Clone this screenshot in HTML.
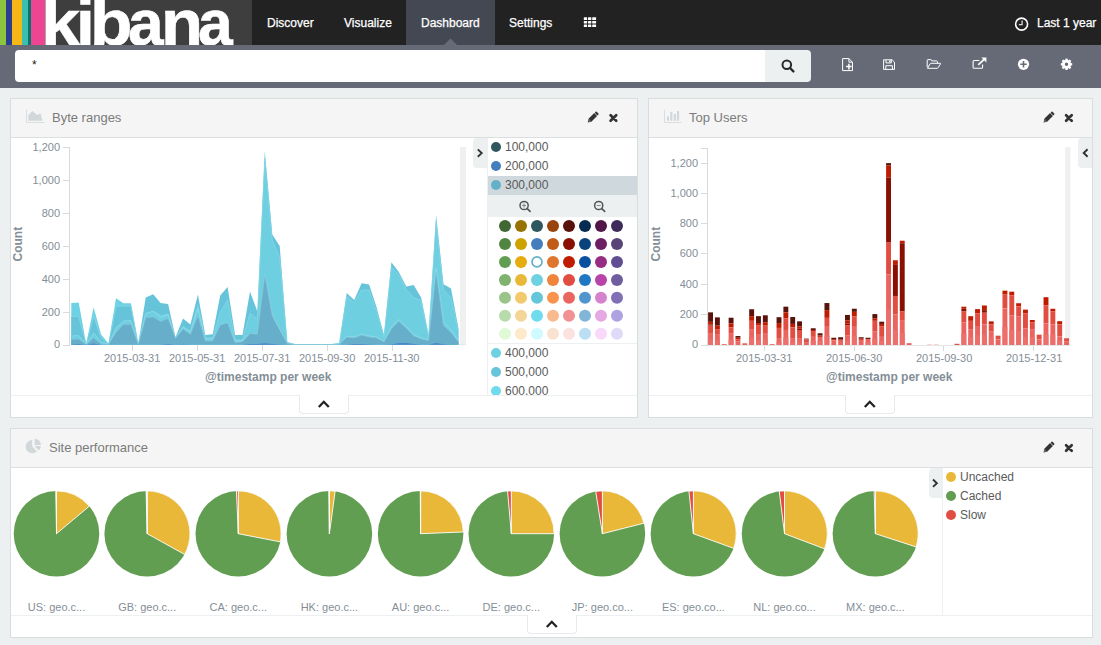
<!DOCTYPE html>
<html>
<head>
<meta charset="utf-8">
<title>Kibana Dashboard</title>
<style>
*{box-sizing:border-box;margin:0;padding:0}
html,body{width:1101px;height:645px;overflow:hidden;background:#ecf0f1;font-family:"Liberation Sans",sans-serif;color:#444}
.abs{position:absolute}
#nav{position:absolute;left:0;top:0;width:1101px;height:45px;background:#222}
#logo{position:absolute;left:0;top:0;width:252px;height:45px;background:#3e3e3e;overflow:hidden}
#logo i{position:absolute;top:0;height:45px;display:block}
#logo span{position:absolute;top:-9.4px;font-size:64px;line-height:64px;font-weight:bold;color:#fff;white-space:nowrap;transform-origin:0 0;-webkit-text-stroke:0.6px #fff}
.nv{position:absolute;top:0;height:45px;line-height:47px;font-size:12px;color:#fff;padding:0 15px;white-space:nowrap;-webkit-text-stroke:0.25px #fff}
.nv.act{background:#444853}
#tb{position:absolute;left:0;top:45px;width:1101px;height:43px;background:#656a76}
#q{position:absolute;left:15px;top:5px;width:750px;height:32px;background:#fff;border-radius:4px 0 0 4px;font-size:12px;line-height:30px;padding-left:17px;color:#222}
#qb{position:absolute;left:765px;top:5px;width:46px;height:32px;background:#ecf0f1;border-radius:0 4px 4px 0}
.panel{position:absolute;background:#fff;border:1px solid #dadddd}
.ph{position:absolute;left:0;top:0;right:0;height:39px;background:#f5f5f5;border-bottom:1px solid #dcdfe0}
.pt{position:absolute;top:0;line-height:38px;font-size:13px;color:#7b7b7b;white-space:nowrap}
.ax{position:absolute;font-size:11px;color:#848e96;white-space:nowrap;line-height:12px}
.axr{text-align:right;width:40px}
.axt{position:absolute;font-size:12px;font-weight:bold;color:#848e96;white-space:nowrap;line-height:14px}
.lg{position:absolute;font-size:12px;color:#5a5a5a;line-height:19px;white-space:nowrap;margin-top:1px}
.dot{position:absolute;width:10px;height:10px;border-radius:50%}
.plbl{position:absolute;top:601px;width:90px;text-align:center;font-size:11px;color:#848e96;line-height:12px;white-space:nowrap}
.spy{position:absolute;background:#fff;border:1px solid #e6eaeb;border-top:none;border-radius:0 0 4px 4px}
svg{position:absolute;left:0;top:0;overflow:visible}
</style>
</head>
<body>

<!-- ======================= NAV ======================= -->
<div id="nav">
  <div id="logo">
    <i style="left:0;width:6px;background:#8cc540"></i>
    <i style="left:6px;width:5.5px;background:#2a3f90"></i>
    <i style="left:11.5px;width:10.5px;background:#f5b817"></i>
    <i style="left:22px;width:6px;background:#3cbeb0"></i>
    <i style="left:28px;width:3px;background:#07766a"></i>
    <i style="left:31px;width:14px;background:#ee4593"></i>
    <span style="left:40.8px;transform:scaleX(1.10)">k</span><span style="left:76.25px;transform:scaleX(1.06)">i</span><span style="left:89.9px;transform:scaleX(1.084)">b</span><span style="left:128.1px">a</span><span style="left:160.7px;transform:scaleX(1.075)">n</span><span style="left:198.1px;transform:scaleX(0.975)">a</span>
  </div>
  <div class="nv" style="left:252px">Discover</div>
  <div class="nv" style="left:329px">Visualize</div>
  <div class="nv act" style="left:406px">Dashboard</div>
  <div class="nv" style="left:494px">Settings</div>
  <div class="nv" style="left:1037px;padding:0">Last 1 year</div>
</div>

<!-- ======================= TOOLBAR ======================= -->
<div id="tb">
  <div id="q">*</div>
  <div id="qb"></div>
</div>

<!-- ======================= PANEL 1 : Byte ranges ======================= -->
<div class="panel" style="left:10px;top:98px;width:628px;height:320px">
  <div class="ph"></div>
  <div class="pt" style="left:41px">Byte ranges</div>
</div>

<!-- ======================= PANEL 2 : Top Users ======================= -->
<div class="panel" style="left:648px;top:98px;width:445px;height:320px">
  <div class="ph"></div>
  <div class="pt" style="left:40px">Top Users</div>
</div>

<!-- ======================= PANEL 3 : Site performance ======================= -->
<div class="panel" style="left:10px;top:428px;width:1083px;height:210px">
  <div class="ph"></div>
  <div class="pt" style="left:38px">Site performance</div>
</div>

<!-- axis labels panel 1 -->
<div class="ax axr" style="left:20px;top:141px">1,200</div>
<div class="ax axr" style="left:20px;top:174px">1,000</div>
<div class="ax axr" style="left:20px;top:207px">800</div>
<div class="ax axr" style="left:20px;top:240px">600</div>
<div class="ax axr" style="left:20px;top:273px">400</div>
<div class="ax axr" style="left:20px;top:306px">200</div>
<div class="ax axr" style="left:20px;top:338px">0</div>
<div class="ax" style="left:104px;top:352px">2015-03-31</div>
<div class="ax" style="left:169px;top:352px">2015-05-31</div>
<div class="ax" style="left:234px;top:352px">2015-07-31</div>
<div class="ax" style="left:299px;top:352px">2015-09-30</div>
<div class="ax" style="left:364px;top:352px">2015-11-30</div>
<div class="axt" style="left:205px;top:370px">@timestamp per week</div>
<div class="axt" style="left:0;top:0;transform-origin:0 0;transform:translate(11px,261.5px) rotate(-90deg)">Count</div>

<!-- axis labels panel 2 -->
<div class="ax axr" style="left:658px;top:157px">1,200</div>
<div class="ax axr" style="left:658px;top:187px">1,000</div>
<div class="ax axr" style="left:658px;top:217px">800</div>
<div class="ax axr" style="left:658px;top:247px">600</div>
<div class="ax axr" style="left:658px;top:278px">400</div>
<div class="ax axr" style="left:658px;top:308px">200</div>
<div class="ax axr" style="left:658px;top:338px">0</div>
<div class="ax" style="left:736px;top:352px">2015-03-31</div>
<div class="ax" style="left:826px;top:352px">2015-06-30</div>
<div class="ax" style="left:916px;top:352px">2015-09-30</div>
<div class="ax" style="left:1006px;top:352px">2015-12-31</div>
<div class="axt" style="left:826px;top:370px">@timestamp per week</div>
<div class="axt" style="left:0;top:0;transform-origin:0 0;transform:translate(649px,261.5px) rotate(-90deg)">Count</div>

<!-- legend panel 1 -->
<div class="abs" style="left:487px;top:138px;width:150px;height:257px;border-left:1px solid #ecf0f1;background:#fff"></div>
<div class="abs" style="left:488px;top:176px;width:149px;height:19px;background:#cfd8dc"></div>
<div class="abs" style="left:488px;top:195px;width:149px;height:22px;background:#ecf0f1"></div>
<div class="abs" style="left:488px;top:343px;width:149px;height:1px;background:#ecf0f1"></div>
<div class="dot" style="left:491px;top:142px;background:#2f575e"></div><div class="lg" style="left:505px;top:137px">100,000</div>
<div class="dot" style="left:491px;top:161px;background:#447ebc"></div><div class="lg" style="left:505px;top:156px">200,000</div>
<div class="dot" style="left:491px;top:180px;background:#64b0c8"></div><div class="lg" style="left:505px;top:175px">300,000</div>
<div class="dot" style="left:491px;top:348px;background:#6ed0e0"></div><div class="lg" style="left:505px;top:343px">400,000</div>
<div class="dot" style="left:491px;top:367px;background:#65c5db"></div><div class="lg" style="left:505px;top:362px">500,000</div>
<div class="abs" style="left:489px;top:381px;width:148px;height:14px;overflow:hidden"><div class="dot" style="left:2px;top:5px;background:#70dbed"></div><div class="lg" style="left:16px;top:0px">600,000</div></div>

<!-- legend panel 3 -->
<div class="abs" style="left:942px;top:468px;width:1px;height:147px;background:#ecf0f1"></div>
<div class="dot" style="left:946px;top:472px;background:#eab839"></div><div class="lg" style="left:960px;top:467px">Uncached</div>
<div class="dot" style="left:946px;top:491px;background:#629e51"></div><div class="lg" style="left:960px;top:486px">Cached</div>
<div class="dot" style="left:946px;top:510px;background:#e24d42"></div><div class="lg" style="left:960px;top:505px">Slow</div>

<!-- spy lines and tabs -->
<div class="abs" style="left:11px;top:395px;width:626px;height:1px;background:#ecf0f1"></div>
<div class="spy" style="left:299px;top:395px;width:50px;height:19px"></div>
<div class="abs" style="left:649px;top:395px;width:443px;height:1px;background:#ecf0f1"></div>
<div class="spy" style="left:845px;top:395px;width:50px;height:19px"></div>
<div class="abs" style="left:11px;top:615px;width:1081px;height:1px;background:#ecf0f1"></div>
<div class="spy" style="left:527px;top:615px;width:50px;height:19px"></div>

<!-- legend toggles -->
<div class="abs" style="left:473px;top:138px;width:15px;height:30px;background:#ecf0f1;border-radius:4px 0 0 4px"></div>
<div class="abs" style="left:1078px;top:138px;width:14px;height:30px;background:#ecf0f1;border-radius:4px 0 0 4px"></div>
<div class="abs" style="left:929px;top:468px;width:14px;height:30px;background:#ecf0f1;border-radius:4px 0 0 4px"></div>

<div class="plbl" style="left:11.5px">US: geo.c...</div>
<div class="plbl" style="left:102.2px">GB: geo.c...</div>
<div class="plbl" style="left:193.3px">CA: geo.c...</div>
<div class="plbl" style="left:284.4px">HK: geo.c...</div>
<div class="plbl" style="left:375.6px">AU: geo.c...</div>
<div class="plbl" style="left:466.3px">DE: geo.c...</div>
<div class="plbl" style="left:557.4px">JP: geo.co...</div>
<div class="plbl" style="left:648.4px">ES: geo.co...</div>
<div class="plbl" style="left:739.5px">NL: geo.co...</div>
<div class="plbl" style="left:830.4px">MX: geo.c...</div>

<!-- ======================= SVG overlay ======================= -->
<svg width="1101" height="645" viewBox="0 0 1101 645">
  <!-- active tab notch -->
  <polygon points="444,45 450.5,38.5 457,45" fill="#656a76"/>

  <!-- grey brush bands -->
  <rect x="460" y="147" width="6" height="198" fill="#f0f0f0"/>
  <rect x="1065" y="147" width="5.5" height="198" fill="#f0f0f0"/>

  <!-- axes panel 1 -->
  <g stroke="#d9dadb" stroke-width="1" fill="none" shape-rendering="crispEdges">
    <path d="M63,147.5H69.5V345.5H63"/>
    <path d="M63,180.5H69 M63,213.5H69 M63,246.5H69 M63,279.5H69 M63,312.5H69"/>
    <path d="M71,344.5H466" stroke="#e4e6e7"/>
    <path d="M132.5,345V351 M197.5,345V351 M262.5,345V351 M327.5,345V351 M392.5,345V351"/>
  </g>
  <!-- axes panel 2 -->
  <g stroke="#d9dadb" stroke-width="1" fill="none" shape-rendering="crispEdges">
    <path d="M701,148.5H707.5V345.5H701"/>
    <path d="M701,163.5H707 M701,193.5H707 M701,223.5H707 M701,253.5H707 M701,284.5H707 M701,314.5H707"/>
    <path d="M707.5,345.5H1070" stroke="#e4e6e7"/>
    <path d="M764.5,346V351 M854.5,346V351 M943.5,346V351 M1033.5,346V351"/>
  </g>

  <!-- area chart -->
  <g>
<polygon points="71.3,344.7 71.3,303.0 78.7,302.5 86.2,344.0 93.6,307.3 101.1,334.5 108.5,343.6 116.0,298.2 123.4,303.3 130.9,303.3 138.3,343.6 138.3,344.7" fill="#6dd2e4" />
<polygon points="71.3,344.7 71.3,316.4 78.7,316.7 86.2,344.5 93.6,316.0 101.1,338.0 108.5,344.5 116.0,306.4 123.4,306.0 130.9,306.0 138.3,344.5 138.3,344.7" fill="#66c4da" />
<polygon points="138.3,344.7 138.3,343.6 145.7,297.6 153.2,294.2 160.6,303.1 168.1,304.0 175.5,337.3 183.0,318.5 190.4,324.5 197.9,294.5 205.3,335.0 212.7,334.2 220.2,295.5 227.6,287.0 235.1,335.0 242.5,335.0 250.0,291.6 257.4,311.5 264.8,151.4 272.3,234.5 279.7,246.0 287.2,342.0 294.6,344.0 302.1,344.0 309.5,344.0 317.0,344.0 324.4,344.0 331.8,344.0 339.3,343.0 346.7,293.0 354.2,300.0 361.6,283.3 369.1,284.4 376.5,307.0 384.0,335.0 391.4,262.3 398.8,272.0 406.3,286.5 413.7,285.0 421.2,297.7 428.6,335.0 436.1,215.0 443.5,284.2 451.0,288.4 458.4,328.0 458.4,344.7" fill="#66c4da" />
<polygon points="138.3,344.7 138.3,344.5 145.7,313.6 153.2,311.3 160.6,315.5 168.1,314.2 175.5,338.5 183.0,326.4 190.4,331.0 197.9,305.5 205.3,338.0 212.7,337.8 220.2,312.7 227.6,300.0 235.1,340.0 242.5,340.0 250.0,313.3 257.4,319.0 264.8,158.0 272.3,241.0 279.7,257.0 287.2,343.0 294.6,344.5 302.1,344.5 309.5,344.5 317.0,344.5 324.4,344.5 331.8,344.5 339.3,344.0 346.7,296.5 354.2,302.5 361.6,290.0 369.1,290.0 376.5,311.0 384.0,337.0 391.4,267.4 398.8,274.4 406.3,289.5 413.7,297.7 421.2,300.5 428.6,337.0 436.1,222.0 443.5,289.5 451.0,297.7 458.4,331.0 458.4,344.7" fill="#6ecfe0" />
<polyline points="71.3,316.4 78.7,316.7 86.2,344.5 93.6,316.0 101.1,338.0 108.5,344.5 116.0,306.4 123.4,306.0 130.9,306.0 138.3,344.5 145.7,313.6 153.2,311.3 160.6,315.5 168.1,314.2 175.5,338.5 183.0,326.4 190.4,331.0 197.9,305.5 205.3,338.0 212.7,337.8 220.2,312.7 227.6,300.0 235.1,340.0 242.5,340.0 250.0,313.3 257.4,319.0 264.8,158.0 272.3,241.0 279.7,257.0 287.2,343.0 294.6,344.5 302.1,344.5 309.5,344.5 317.0,344.5 324.4,344.5 331.8,344.5 339.3,344.0 346.7,296.5 354.2,302.5 361.6,290.0 369.1,290.0 376.5,311.0 384.0,337.0 391.4,267.4 398.8,274.4 406.3,289.5 413.7,297.7 421.2,300.5 428.6,337.0 436.1,222.0 443.5,289.5 451.0,297.7 458.4,331.0" fill="none" stroke="#8ad9e8" stroke-width="0.7"/>
<polygon points="71.3,344.7 71.3,336.0 78.7,335.5 86.2,344.5 93.6,333.0 101.1,342.0 108.5,344.5 116.0,328.0 123.4,321.0 130.9,320.5 138.3,344.5 145.7,313.6 153.2,311.3 160.6,317.5 168.1,314.8 175.5,338.5 183.0,327.5 190.4,332.5 197.9,309.0 205.3,339.0 212.7,339.0 220.2,324.7 227.6,322.4 235.1,341.0 242.5,340.5 250.0,333.3 257.4,333.9 264.8,274.5 272.3,315.0 279.7,329.0 287.2,343.5 294.6,344.5 302.1,344.5 309.5,344.5 317.0,344.5 324.4,344.5 331.8,344.5 339.3,344.5 346.7,336.0 354.2,337.0 361.6,334.0 369.1,336.0 376.5,337.0 384.0,341.5 391.4,327.0 398.8,319.5 406.3,326.5 413.7,334.5 421.2,338.0 428.6,340.0 436.1,268.0 443.5,322.0 451.0,330.0 458.4,341.0 458.4,344.7" fill="#6fcfe1" />
<polyline points="71.3,336.0 78.7,335.5 86.2,344.5 93.6,333.0 101.1,342.0 108.5,344.5 116.0,328.0 123.4,321.0 130.9,320.5 138.3,344.5 145.7,313.6 153.2,311.3 160.6,317.5 168.1,314.8 175.5,338.5 183.0,327.5 190.4,332.5 197.9,309.0 205.3,339.0 212.7,339.0 220.2,324.7 227.6,322.4 235.1,341.0 242.5,340.5 250.0,333.3 257.4,333.9 264.8,274.5 272.3,315.0 279.7,329.0 287.2,343.5 294.6,344.5 302.1,344.5 309.5,344.5 317.0,344.5 324.4,344.5 331.8,344.5 339.3,344.5 346.7,336.0 354.2,337.0 361.6,334.0 369.1,336.0 376.5,337.0 384.0,341.5 391.4,327.0 398.8,319.5 406.3,326.5 413.7,334.5 421.2,338.0 428.6,340.0 436.1,268.0 443.5,322.0 451.0,330.0 458.4,341.0" fill="none" stroke="#93dcea" stroke-width="0.7"/>
<polygon points="71.3,344.7 71.3,339.6 78.7,339.0 86.2,344.5 93.6,338.0 101.1,344.0 108.5,344.5 116.0,332.7 123.4,324.5 130.9,324.5 138.3,344.5 145.7,317.8 153.2,317.0 160.6,321.5 168.1,318.5 175.5,338.5 183.0,329.0 190.4,334.5 197.9,316.0 205.3,341.0 212.7,341.0 220.2,325.0 227.6,322.7 235.1,342.7 242.5,341.8 250.0,333.6 257.4,334.2 264.8,275.0 272.3,316.0 279.7,330.0 287.2,343.5 294.6,344.5 302.1,344.5 309.5,344.5 317.0,344.5 324.4,344.5 331.8,344.5 339.3,344.5 346.7,337.2 354.2,338.0 361.6,335.3 369.1,337.0 376.5,338.0 384.0,342.0 391.4,329.0 398.8,321.4 406.3,328.4 413.7,336.0 421.2,339.0 428.6,340.7 436.1,272.0 443.5,325.6 451.0,332.5 458.4,342.0 458.4,344.7" fill="#66aec9" />
<polyline points="71.3,339.6 78.7,339.0 86.2,344.5 93.6,338.0 101.1,344.0 108.5,344.5 116.0,332.7 123.4,324.5 130.9,324.5 138.3,344.5 145.7,317.8 153.2,317.0 160.6,321.5 168.1,318.5 175.5,338.5 183.0,329.0 190.4,334.5 197.9,316.0 205.3,341.0 212.7,341.0 220.2,325.0 227.6,322.7 235.1,342.7 242.5,341.8 250.0,333.6 257.4,334.2 264.8,275.0 272.3,316.0 279.7,330.0 287.2,343.5 294.6,344.5 302.1,344.5 309.5,344.5 317.0,344.5 324.4,344.5 331.8,344.5 339.3,344.5 346.7,337.2 354.2,338.0 361.6,335.3 369.1,337.0 376.5,338.0 384.0,342.0 391.4,329.0 398.8,321.4 406.3,328.4 413.7,336.0 421.2,339.0 428.6,340.7 436.1,272.0 443.5,325.6 451.0,332.5 458.4,342.0" fill="none" stroke="#86c2d8" stroke-width="0.6"/>
<polygon points="71.3,344.7 71.3,344.4 78.7,343.9 86.2,344.7 93.6,343.4 101.1,344.7 108.5,344.7 116.0,344.7 123.4,344.7 130.9,344.7 138.3,344.7 145.7,344.7 153.2,344.7 160.6,344.7 168.1,343.9 175.5,344.7 183.0,344.4 190.4,344.7 197.9,344.7 205.3,344.7 212.7,344.7 220.2,344.7 227.6,344.7 235.1,344.7 242.5,344.7 250.0,344.1 257.4,344.1 264.8,343.2 272.3,343.9 279.7,344.4 287.2,344.7 294.6,344.7 302.1,344.7 309.5,344.7 317.0,344.7 324.4,344.7 331.8,344.7 339.3,344.7 346.7,344.7 354.2,343.9 361.6,343.9 369.1,344.4 376.5,344.7 384.0,344.7 391.4,344.4 398.8,342.9 406.3,342.9 413.7,343.9 421.2,344.7 428.6,344.7 436.1,342.9 443.5,344.2 451.0,344.7 458.4,344.7 458.4,344.7" fill="#4a86c8" />
  </g>

  <!-- bar chart -->
  <g>
<rect x="708.10" y="312.36" width="4.90" height="9.50" fill="#58140c"/>
<rect x="708.10" y="321.86" width="4.90" height="2.59" fill="#bf1b00"/>
<rect x="708.10" y="324.45" width="4.90" height="1.21" fill="#890f02"/>
<rect x="708.10" y="325.66" width="4.90" height="8.12" fill="#e24d42"/>
<rect x="708.10" y="333.77" width="4.90" height="11.23" fill="#ea6460"/>
<rect x="708.10" y="339.39" width="4.90" height="5.61" fill="#ec6f6b"/>
<rect x="714.95" y="317.37" width="4.90" height="8.29" fill="#58140c"/>
<rect x="714.95" y="325.66" width="4.90" height="3.45" fill="#bf1b00"/>
<rect x="714.95" y="329.11" width="4.90" height="5.70" fill="#e24d42"/>
<rect x="714.95" y="334.81" width="4.90" height="10.19" fill="#ea6460"/>
<rect x="714.95" y="339.91" width="4.90" height="5.09" fill="#ec6f6b"/>
<rect x="721.79" y="344.14" width="4.90" height="0.86" fill="#ea6460"/>
<rect x="728.64" y="317.71" width="4.90" height="5.70" fill="#58140c"/>
<rect x="728.64" y="323.41" width="4.90" height="3.97" fill="#bf1b00"/>
<rect x="728.64" y="327.38" width="4.90" height="6.39" fill="#e24d42"/>
<rect x="728.64" y="333.77" width="4.90" height="11.23" fill="#ea6460"/>
<rect x="728.64" y="339.39" width="4.90" height="5.61" fill="#ec6f6b"/>
<rect x="735.48" y="336.02" width="4.90" height="1.73" fill="#58140c"/>
<rect x="735.48" y="337.75" width="4.90" height="1.73" fill="#bf1b00"/>
<rect x="735.48" y="339.47" width="4.90" height="1.73" fill="#e24d42"/>
<rect x="735.48" y="341.20" width="4.90" height="3.80" fill="#ea6460"/>
<rect x="742.33" y="343.27" width="4.90" height="1.73" fill="#ea6460"/>
<rect x="749.18" y="309.25" width="4.90" height="6.91" fill="#58140c"/>
<rect x="749.18" y="316.16" width="4.90" height="4.66" fill="#bf1b00"/>
<rect x="749.18" y="320.82" width="4.90" height="8.29" fill="#e24d42"/>
<rect x="749.18" y="329.11" width="4.90" height="15.89" fill="#ea6460"/>
<rect x="749.18" y="337.06" width="4.90" height="7.94" fill="#ec6f6b"/>
<rect x="756.02" y="316.16" width="4.90" height="6.91" fill="#58140c"/>
<rect x="756.02" y="323.07" width="4.90" height="2.07" fill="#bf1b00"/>
<rect x="756.02" y="325.14" width="4.90" height="9.67" fill="#e24d42"/>
<rect x="756.02" y="334.81" width="4.90" height="10.19" fill="#ea6460"/>
<rect x="756.02" y="339.91" width="4.90" height="5.09" fill="#ec6f6b"/>
<rect x="762.87" y="315.29" width="4.90" height="6.91" fill="#58140c"/>
<rect x="762.87" y="322.20" width="4.90" height="3.45" fill="#bf1b00"/>
<rect x="762.87" y="325.66" width="4.90" height="8.12" fill="#e24d42"/>
<rect x="762.87" y="333.77" width="4.90" height="11.23" fill="#ea6460"/>
<rect x="762.87" y="339.39" width="4.90" height="5.61" fill="#ec6f6b"/>
<rect x="769.71" y="344.14" width="4.90" height="0.86" fill="#ea6460"/>
<rect x="776.56" y="317.19" width="4.90" height="5.87" fill="#58140c"/>
<rect x="776.56" y="323.07" width="4.90" height="4.84" fill="#bf1b00"/>
<rect x="776.56" y="327.90" width="4.90" height="10.19" fill="#e24d42"/>
<rect x="776.56" y="338.09" width="4.90" height="6.91" fill="#ea6460"/>
<rect x="776.56" y="341.55" width="4.90" height="3.45" fill="#ec6f6b"/>
<rect x="783.41" y="306.66" width="4.90" height="5.70" fill="#58140c"/>
<rect x="783.41" y="312.36" width="4.90" height="5.87" fill="#bf1b00"/>
<rect x="783.41" y="318.23" width="4.90" height="11.74" fill="#e24d42"/>
<rect x="783.41" y="329.97" width="4.90" height="15.03" fill="#ea6460"/>
<rect x="783.41" y="337.49" width="4.90" height="7.51" fill="#ec6f6b"/>
<rect x="790.25" y="317.02" width="4.90" height="6.91" fill="#58140c"/>
<rect x="790.25" y="323.93" width="4.90" height="3.45" fill="#bf1b00"/>
<rect x="790.25" y="327.38" width="4.90" height="10.71" fill="#e24d42"/>
<rect x="790.25" y="338.09" width="4.90" height="6.91" fill="#ea6460"/>
<rect x="790.25" y="341.55" width="4.90" height="3.45" fill="#ec6f6b"/>
<rect x="797.10" y="321.34" width="4.90" height="5.18" fill="#58140c"/>
<rect x="797.10" y="326.52" width="4.90" height="2.25" fill="#bf1b00"/>
<rect x="797.10" y="328.77" width="4.90" height="1.21" fill="#890f02"/>
<rect x="797.10" y="329.97" width="4.90" height="8.12" fill="#e24d42"/>
<rect x="797.10" y="338.09" width="4.90" height="6.91" fill="#ea6460"/>
<rect x="797.10" y="341.55" width="4.90" height="3.45" fill="#ec6f6b"/>
<rect x="803.94" y="338.61" width="4.90" height="0.86" fill="#58140c"/>
<rect x="803.94" y="339.47" width="4.90" height="2.59" fill="#e24d42"/>
<rect x="803.94" y="342.06" width="4.90" height="2.94" fill="#ea6460"/>
<rect x="810.79" y="328.25" width="4.90" height="1.73" fill="#58140c"/>
<rect x="810.79" y="329.97" width="4.90" height="1.73" fill="#bf1b00"/>
<rect x="810.79" y="331.70" width="4.90" height="5.18" fill="#e24d42"/>
<rect x="810.79" y="336.88" width="4.90" height="8.12" fill="#ea6460"/>
<rect x="810.79" y="340.94" width="4.90" height="4.06" fill="#ec6f6b"/>
<rect x="817.64" y="333.26" width="4.90" height="2.25" fill="#58140c"/>
<rect x="817.64" y="335.50" width="4.90" height="1.38" fill="#bf1b00"/>
<rect x="817.64" y="336.88" width="4.90" height="8.12" fill="#ea6460"/>
<rect x="817.64" y="340.94" width="4.90" height="4.06" fill="#ec6f6b"/>
<rect x="824.48" y="303.03" width="4.90" height="7.08" fill="#58140c"/>
<rect x="824.48" y="310.11" width="4.90" height="7.77" fill="#bf1b00"/>
<rect x="824.48" y="317.88" width="4.90" height="8.12" fill="#e24d42"/>
<rect x="824.48" y="326.00" width="4.90" height="19.00" fill="#ea6460"/>
<rect x="824.48" y="335.50" width="4.90" height="9.50" fill="#ec6f6b"/>
<rect x="831.33" y="337.75" width="4.90" height="1.38" fill="#58140c"/>
<rect x="831.33" y="339.13" width="4.90" height="1.21" fill="#bf1b00"/>
<rect x="831.33" y="340.34" width="4.90" height="4.66" fill="#ea6460"/>
<rect x="838.17" y="337.23" width="4.90" height="2.25" fill="#58140c"/>
<rect x="838.17" y="339.47" width="4.90" height="1.21" fill="#bf1b00"/>
<rect x="838.17" y="340.68" width="4.90" height="4.32" fill="#ea6460"/>
<rect x="845.02" y="314.95" width="4.90" height="5.53" fill="#58140c"/>
<rect x="845.02" y="320.47" width="4.90" height="3.11" fill="#bf1b00"/>
<rect x="845.02" y="323.58" width="4.90" height="1.55" fill="#890f02"/>
<rect x="845.02" y="325.14" width="4.90" height="10.02" fill="#e24d42"/>
<rect x="845.02" y="335.16" width="4.90" height="9.84" fill="#ea6460"/>
<rect x="845.02" y="340.08" width="4.90" height="4.92" fill="#ec6f6b"/>
<rect x="851.87" y="308.73" width="4.90" height="3.11" fill="#58140c"/>
<rect x="851.87" y="311.84" width="4.90" height="4.66" fill="#bf1b00"/>
<rect x="851.87" y="316.50" width="4.90" height="10.36" fill="#e24d42"/>
<rect x="851.87" y="326.87" width="4.90" height="18.13" fill="#ea6460"/>
<rect x="851.87" y="335.93" width="4.90" height="9.07" fill="#ec6f6b"/>
<rect x="858.71" y="337.23" width="4.90" height="1.38" fill="#58140c"/>
<rect x="858.71" y="338.61" width="4.90" height="1.21" fill="#bf1b00"/>
<rect x="858.71" y="339.82" width="4.90" height="5.18" fill="#ea6460"/>
<rect x="865.56" y="337.75" width="4.90" height="1.21" fill="#58140c"/>
<rect x="865.56" y="338.96" width="4.90" height="6.04" fill="#ea6460"/>
<rect x="865.56" y="341.98" width="4.90" height="3.02" fill="#ec6f6b"/>
<rect x="872.40" y="314.08" width="4.90" height="4.15" fill="#58140c"/>
<rect x="872.40" y="318.23" width="4.90" height="2.59" fill="#bf1b00"/>
<rect x="872.40" y="320.82" width="4.90" height="10.88" fill="#e24d42"/>
<rect x="872.40" y="331.70" width="4.90" height="13.30" fill="#ea6460"/>
<rect x="872.40" y="338.35" width="4.90" height="6.65" fill="#ec6f6b"/>
<rect x="879.25" y="321.68" width="4.90" height="2.25" fill="#58140c"/>
<rect x="879.25" y="323.93" width="4.90" height="2.25" fill="#bf1b00"/>
<rect x="879.25" y="326.17" width="4.90" height="10.71" fill="#e24d42"/>
<rect x="879.25" y="336.88" width="4.90" height="8.12" fill="#ea6460"/>
<rect x="879.25" y="340.94" width="4.90" height="4.06" fill="#ec6f6b"/>
<rect x="886.10" y="163.13" width="4.90" height="2.48" fill="#58140c"/>
<rect x="886.10" y="165.61" width="4.90" height="11.79" fill="#bf1b00"/>
<rect x="886.10" y="177.40" width="4.90" height="65.18" fill="#890f02"/>
<rect x="886.10" y="242.58" width="4.90" height="31.66" fill="#e24d42"/>
<rect x="886.10" y="274.24" width="4.90" height="70.76" fill="#ea6460"/>
<rect x="886.10" y="309.62" width="4.90" height="35.38" fill="#ec6f6b"/>
<rect x="892.94" y="260.27" width="4.90" height="4.66" fill="#bf1b00"/>
<rect x="892.94" y="264.93" width="4.90" height="31.04" fill="#890f02"/>
<rect x="892.94" y="295.96" width="4.90" height="18.62" fill="#e24d42"/>
<rect x="892.94" y="314.58" width="4.90" height="30.42" fill="#ea6460"/>
<rect x="892.94" y="329.79" width="4.90" height="15.21" fill="#ec6f6b"/>
<rect x="899.79" y="240.72" width="4.90" height="2.48" fill="#bf1b00"/>
<rect x="899.79" y="243.20" width="4.90" height="68.28" fill="#890f02"/>
<rect x="899.79" y="311.48" width="4.90" height="9.31" fill="#e24d42"/>
<rect x="899.79" y="320.79" width="4.90" height="24.21" fill="#ea6460"/>
<rect x="899.79" y="332.90" width="4.90" height="12.10" fill="#ec6f6b"/>
<rect x="906.63" y="343.14" width="4.90" height="1.86" fill="#ea6460"/>
<rect x="927.17" y="344.31" width="4.90" height="0.69" fill="#f6c1bf"/>
<rect x="934.02" y="344.31" width="4.90" height="0.69" fill="#f6c1bf"/>
<rect x="954.56" y="343.79" width="4.90" height="1.21" fill="#e24d42"/>
<rect x="961.40" y="306.69" width="4.90" height="2.07" fill="#bf1b00"/>
<rect x="961.40" y="308.76" width="4.90" height="2.76" fill="#890f02"/>
<rect x="961.40" y="311.52" width="4.90" height="10.70" fill="#e24d42"/>
<rect x="961.40" y="322.22" width="4.90" height="22.78" fill="#ea6460"/>
<rect x="961.40" y="333.61" width="4.90" height="11.39" fill="#ec6f6b"/>
<rect x="968.25" y="316.18" width="4.90" height="4.66" fill="#bf1b00"/>
<rect x="968.25" y="320.84" width="4.90" height="8.28" fill="#e24d42"/>
<rect x="968.25" y="329.12" width="4.90" height="15.88" fill="#ea6460"/>
<rect x="968.25" y="337.06" width="4.90" height="7.94" fill="#ec6f6b"/>
<rect x="975.09" y="309.11" width="4.90" height="4.14" fill="#bf1b00"/>
<rect x="975.09" y="313.25" width="4.90" height="12.77" fill="#e24d42"/>
<rect x="975.09" y="326.02" width="4.90" height="18.98" fill="#ea6460"/>
<rect x="975.09" y="335.51" width="4.90" height="9.49" fill="#ec6f6b"/>
<rect x="981.94" y="305.48" width="4.90" height="4.66" fill="#bf1b00"/>
<rect x="981.94" y="310.14" width="4.90" height="2.59" fill="#890f02"/>
<rect x="981.94" y="312.73" width="4.90" height="11.56" fill="#e24d42"/>
<rect x="981.94" y="324.29" width="4.90" height="20.71" fill="#ea6460"/>
<rect x="981.94" y="334.65" width="4.90" height="10.35" fill="#ec6f6b"/>
<rect x="988.79" y="321.36" width="4.90" height="2.93" fill="#bf1b00"/>
<rect x="988.79" y="324.29" width="4.90" height="6.90" fill="#e24d42"/>
<rect x="988.79" y="331.19" width="4.90" height="13.81" fill="#ea6460"/>
<rect x="988.79" y="338.10" width="4.90" height="6.90" fill="#ec6f6b"/>
<rect x="995.63" y="335.68" width="4.90" height="3.80" fill="#e24d42"/>
<rect x="995.63" y="339.48" width="4.90" height="5.52" fill="#ea6460"/>
<rect x="1002.48" y="290.64" width="4.90" height="3.97" fill="#bf1b00"/>
<rect x="1002.48" y="294.61" width="4.90" height="13.81" fill="#e24d42"/>
<rect x="1002.48" y="308.42" width="4.90" height="36.58" fill="#ea6460"/>
<rect x="1002.48" y="326.71" width="4.90" height="18.29" fill="#ec6f6b"/>
<rect x="1009.32" y="291.68" width="4.90" height="3.80" fill="#bf1b00"/>
<rect x="1009.32" y="295.47" width="4.90" height="20.19" fill="#e24d42"/>
<rect x="1009.32" y="315.66" width="4.90" height="29.34" fill="#ea6460"/>
<rect x="1009.32" y="330.33" width="4.90" height="14.67" fill="#ec6f6b"/>
<rect x="1016.17" y="303.24" width="4.90" height="3.11" fill="#bf1b00"/>
<rect x="1016.17" y="306.35" width="4.90" height="10.35" fill="#e24d42"/>
<rect x="1016.17" y="316.70" width="4.90" height="28.30" fill="#ea6460"/>
<rect x="1016.17" y="330.85" width="4.90" height="14.15" fill="#ec6f6b"/>
<rect x="1023.02" y="309.62" width="4.90" height="3.62" fill="#bf1b00"/>
<rect x="1023.02" y="313.25" width="4.90" height="15.36" fill="#e24d42"/>
<rect x="1023.02" y="328.61" width="4.90" height="16.39" fill="#ea6460"/>
<rect x="1023.02" y="336.80" width="4.90" height="8.20" fill="#ec6f6b"/>
<rect x="1029.86" y="319.98" width="4.90" height="2.24" fill="#bf1b00"/>
<rect x="1029.86" y="322.22" width="4.90" height="6.90" fill="#e24d42"/>
<rect x="1029.86" y="329.12" width="4.90" height="15.88" fill="#ea6460"/>
<rect x="1029.86" y="337.06" width="4.90" height="7.94" fill="#ec6f6b"/>
<rect x="1036.71" y="334.65" width="4.90" height="4.83" fill="#e24d42"/>
<rect x="1036.71" y="339.48" width="4.90" height="5.52" fill="#ea6460"/>
<rect x="1043.55" y="297.20" width="4.90" height="8.28" fill="#bf1b00"/>
<rect x="1043.55" y="305.48" width="4.90" height="17.95" fill="#e24d42"/>
<rect x="1043.55" y="323.43" width="4.90" height="21.57" fill="#ea6460"/>
<rect x="1043.55" y="334.21" width="4.90" height="10.79" fill="#ec6f6b"/>
<rect x="1050.40" y="308.76" width="4.90" height="2.76" fill="#bf1b00"/>
<rect x="1050.40" y="311.52" width="4.90" height="12.77" fill="#e24d42"/>
<rect x="1050.40" y="324.29" width="4.90" height="20.71" fill="#ea6460"/>
<rect x="1050.40" y="334.65" width="4.90" height="10.35" fill="#ec6f6b"/>
<rect x="1057.25" y="321.19" width="4.90" height="3.11" fill="#bf1b00"/>
<rect x="1057.25" y="324.29" width="4.90" height="12.08" fill="#e24d42"/>
<rect x="1057.25" y="336.37" width="4.90" height="8.63" fill="#ea6460"/>
<rect x="1057.25" y="340.69" width="4.90" height="4.31" fill="#ec6f6b"/>
<rect x="1064.09" y="338.27" width="4.90" height="2.93" fill="#e24d42"/>
<rect x="1064.09" y="341.20" width="4.90" height="3.80" fill="#ea6460"/>
  </g>

  <!-- pies -->
  <g>
<circle cx="56.50" cy="533.70" r="42.80" fill="#629e51"/>
<path d="M56.50,533.70 L56.50,490.90 A42.80,42.80 0 0 1 89.29,506.19 Z" fill="#eab839" stroke="#fff" stroke-width="0.9" stroke-linejoin="round"/>
<path d="M56.50,533.70 L55.75,490.91 A42.80,42.80 0 0 1 56.50,490.90 Z" fill="#f6e3dc" stroke="#fff" stroke-width="0.9" stroke-linejoin="round"/>
<circle cx="147.20" cy="533.70" r="42.80" fill="#629e51"/>
<path d="M147.20,533.70 L147.20,490.90 A42.80,42.80 0 0 1 184.63,554.45 Z" fill="#eab839" stroke="#fff" stroke-width="0.9" stroke-linejoin="round"/>
<path d="M147.20,533.70 L146.08,490.91 A42.80,42.80 0 0 1 147.20,490.90 Z" fill="#f6e3dc" stroke="#fff" stroke-width="0.9" stroke-linejoin="round"/>
<circle cx="238.30" cy="533.70" r="42.80" fill="#629e51"/>
<path d="M238.30,533.70 L238.30,490.90 A42.80,42.80 0 0 1 280.31,541.87 Z" fill="#eab839" stroke="#fff" stroke-width="0.9" stroke-linejoin="round"/>
<path d="M238.30,533.70 L236.43,490.94 A42.80,42.80 0 0 1 238.30,490.90 Z" fill="#e24d42" stroke="#fff" stroke-width="0.9" stroke-linejoin="round"/>
<circle cx="329.40" cy="533.70" r="42.80" fill="#629e51"/>
<path d="M329.40,533.70 L329.40,490.90 A42.80,42.80 0 0 1 335.13,491.29 Z" fill="#eab839" stroke="#fff" stroke-width="0.9" stroke-linejoin="round"/>
<path d="M329.40,533.70 L328.80,490.90 A42.80,42.80 0 0 1 329.40,490.90 Z" fill="#f6e3dc" stroke="#fff" stroke-width="0.9" stroke-linejoin="round"/>
<circle cx="420.60" cy="533.70" r="42.80" fill="#629e51"/>
<path d="M420.60,533.70 L420.60,490.90 A42.80,42.80 0 0 1 463.37,531.98 Z" fill="#eab839" stroke="#fff" stroke-width="0.9" stroke-linejoin="round"/>
<path d="M420.60,533.70 L420.23,490.90 A42.80,42.80 0 0 1 420.60,490.90 Z" fill="#f6e3dc" stroke="#fff" stroke-width="0.9" stroke-linejoin="round"/>
<circle cx="511.30" cy="533.70" r="42.80" fill="#629e51"/>
<path d="M511.30,533.70 L511.30,490.90 A42.80,42.80 0 0 1 554.10,533.70 Z" fill="#eab839" stroke="#fff" stroke-width="0.9" stroke-linejoin="round"/>
<path d="M511.30,533.70 L507.57,491.06 A42.80,42.80 0 0 1 511.30,490.90 Z" fill="#e24d42" stroke="#fff" stroke-width="0.9" stroke-linejoin="round"/>
<circle cx="602.40" cy="533.70" r="42.80" fill="#629e51"/>
<path d="M602.40,533.70 L602.40,490.90 A42.80,42.80 0 0 1 643.89,523.20 Z" fill="#eab839" stroke="#fff" stroke-width="0.9" stroke-linejoin="round"/>
<path d="M602.40,533.70 L595.70,491.43 A42.80,42.80 0 0 1 602.40,490.90 Z" fill="#e24d42" stroke="#fff" stroke-width="0.9" stroke-linejoin="round"/>
<circle cx="693.40" cy="533.70" r="42.80" fill="#629e51"/>
<path d="M693.40,533.70 L693.40,490.90 A42.80,42.80 0 0 1 733.62,548.34 Z" fill="#eab839" stroke="#fff" stroke-width="0.9" stroke-linejoin="round"/>
<path d="M693.40,533.70 L688.93,491.13 A42.80,42.80 0 0 1 693.40,490.90 Z" fill="#e24d42" stroke="#fff" stroke-width="0.9" stroke-linejoin="round"/>
<circle cx="784.50" cy="533.70" r="42.80" fill="#629e51"/>
<path d="M784.50,533.70 L784.50,490.90 A42.80,42.80 0 0 1 824.54,548.83 Z" fill="#eab839" stroke="#fff" stroke-width="0.9" stroke-linejoin="round"/>
<path d="M784.50,533.70 L779.28,491.22 A42.80,42.80 0 0 1 784.50,490.90 Z" fill="#e24d42" stroke="#fff" stroke-width="0.9" stroke-linejoin="round"/>
<circle cx="875.40" cy="533.70" r="42.80" fill="#629e51"/>
<path d="M875.40,533.70 L875.40,490.90 A42.80,42.80 0 0 1 916.11,546.93 Z" fill="#eab839" stroke="#fff" stroke-width="0.9" stroke-linejoin="round"/>
<path d="M875.40,533.70 L874.13,490.92 A42.80,42.80 0 0 1 875.40,490.90 Z" fill="#e24d42" stroke="#fff" stroke-width="0.9" stroke-linejoin="round"/>
  </g>

  <!-- palette -->
  <g>
<circle cx="505.0" cy="226.0" r="6" fill="#3F6833"/>
<circle cx="521.0" cy="226.0" r="6" fill="#967302"/>
<circle cx="537.0" cy="226.0" r="6" fill="#2F575E"/>
<circle cx="553.0" cy="226.0" r="6" fill="#99440A"/>
<circle cx="569.0" cy="226.0" r="6" fill="#58140C"/>
<circle cx="585.0" cy="226.0" r="6" fill="#052B51"/>
<circle cx="601.0" cy="226.0" r="6" fill="#511749"/>
<circle cx="617.0" cy="226.0" r="6" fill="#3F2B5B"/>
<circle cx="505.0" cy="243.9" r="6" fill="#508642"/>
<circle cx="521.0" cy="243.9" r="6" fill="#CCA300"/>
<circle cx="537.0" cy="243.9" r="6" fill="#447EBC"/>
<circle cx="553.0" cy="243.9" r="6" fill="#C15C17"/>
<circle cx="569.0" cy="243.9" r="6" fill="#890F02"/>
<circle cx="585.0" cy="243.9" r="6" fill="#0A437C"/>
<circle cx="601.0" cy="243.9" r="6" fill="#6D1F62"/>
<circle cx="617.0" cy="243.9" r="6" fill="#584477"/>
<circle cx="505.0" cy="261.9" r="6" fill="#629E51"/>
<circle cx="521.0" cy="261.9" r="6" fill="#E5AC0E"/>
<circle cx="537.0" cy="261.9" r="5" fill="#fff" stroke="#64B0C8" stroke-width="1.7"/>
<circle cx="553.0" cy="261.9" r="6" fill="#E0752D"/>
<circle cx="569.0" cy="261.9" r="6" fill="#BF1B00"/>
<circle cx="585.0" cy="261.9" r="6" fill="#0A50A1"/>
<circle cx="601.0" cy="261.9" r="6" fill="#962D82"/>
<circle cx="617.0" cy="261.9" r="6" fill="#614D93"/>
<circle cx="505.0" cy="279.9" r="6" fill="#7EB26D"/>
<circle cx="521.0" cy="279.9" r="6" fill="#EAB839"/>
<circle cx="537.0" cy="279.9" r="6" fill="#6ED0E0"/>
<circle cx="553.0" cy="279.9" r="6" fill="#EF843C"/>
<circle cx="569.0" cy="279.9" r="6" fill="#E24D42"/>
<circle cx="585.0" cy="279.9" r="6" fill="#1F78C1"/>
<circle cx="601.0" cy="279.9" r="6" fill="#BA43A9"/>
<circle cx="617.0" cy="279.9" r="6" fill="#705DA0"/>
<circle cx="505.0" cy="297.8" r="6" fill="#9AC48A"/>
<circle cx="521.0" cy="297.8" r="6" fill="#F2C96D"/>
<circle cx="537.0" cy="297.8" r="6" fill="#65C5DB"/>
<circle cx="553.0" cy="297.8" r="6" fill="#F9934E"/>
<circle cx="569.0" cy="297.8" r="6" fill="#EA6460"/>
<circle cx="585.0" cy="297.8" r="6" fill="#5195CE"/>
<circle cx="601.0" cy="297.8" r="6" fill="#D683CE"/>
<circle cx="617.0" cy="297.8" r="6" fill="#806EB7"/>
<circle cx="505.0" cy="315.8" r="6" fill="#B7DBAB"/>
<circle cx="521.0" cy="315.8" r="6" fill="#F4D598"/>
<circle cx="537.0" cy="315.8" r="6" fill="#70DBED"/>
<circle cx="553.0" cy="315.8" r="6" fill="#F9BA8F"/>
<circle cx="569.0" cy="315.8" r="6" fill="#F29191"/>
<circle cx="585.0" cy="315.8" r="6" fill="#82B5D8"/>
<circle cx="601.0" cy="315.8" r="6" fill="#E5A8E2"/>
<circle cx="617.0" cy="315.8" r="6" fill="#AEA2E0"/>
<circle cx="505.0" cy="333.7" r="6" fill="#E0F9D7"/>
<circle cx="521.0" cy="333.7" r="6" fill="#FCEACA"/>
<circle cx="537.0" cy="333.7" r="6" fill="#CFFAFF"/>
<circle cx="553.0" cy="333.7" r="6" fill="#F9E2D2"/>
<circle cx="569.0" cy="333.7" r="6" fill="#FCE2DE"/>
<circle cx="585.0" cy="333.7" r="6" fill="#BADFF4"/>
<circle cx="601.0" cy="333.7" r="6" fill="#F9D9F9"/>
<circle cx="617.0" cy="333.7" r="6" fill="#DEDAF7"/>
  </g>

  <!-- ICONS -->
  <g id="icons">
<rect x="583.8" y="17.3" width="3.3" height="2.7" rx="0.5" fill="#fff"/>
<rect x="588" y="17.3" width="3.3" height="2.7" rx="0.5" fill="#fff"/>
<rect x="592.2" y="17.3" width="3.9" height="2.7" rx="0.5" fill="#fff"/>
<rect x="583.8" y="21" width="3.3" height="2.4" rx="0.5" fill="#fff"/>
<rect x="588" y="21" width="3.3" height="2.4" rx="0.5" fill="#fff"/>
<rect x="592.2" y="21" width="3.9" height="2.4" rx="0.5" fill="#fff"/>
<rect x="583.8" y="24.5" width="3.3" height="2.6" rx="0.5" fill="#fff"/>
<rect x="588" y="24.5" width="3.3" height="2.6" rx="0.5" fill="#fff"/>
<rect x="592.2" y="24.5" width="3.9" height="2.6" rx="0.5" fill="#fff"/>
<circle cx="1021.6" cy="24.1" r="6.0" fill="none" stroke="#fff" stroke-width="1.6"/>
<path d="M1022.1,20.6V24.7H1018.9" fill="none" stroke="#d8d8d8" stroke-width="1.3"/>
<circle cx="786.8" cy="64.8" r="4.3" fill="none" stroke="#2a2a2a" stroke-width="2"/>
<path d="M790,68 L793.4,71.4" stroke="#2a2a2a" stroke-width="2.4" stroke-linecap="round"/>
<path d="M842.6,58.6H848.9L852.5,62.2V70.6H842.6Z M848.9,58.6V62.2H852.5" fill="none" stroke="#fff" stroke-width="1" stroke-linejoin="round"/>
<path d="M846.1,66.6H851.7 M848.9,63.8V69.4" stroke="#fff" stroke-width="1.5" fill="none"/>
<path d="M883.6,59.8H892.1L894.5,62.2V69.4H883.6Z" fill="none" stroke="#fff" stroke-width="1" stroke-linejoin="round"/>
<path d="M886,59.8V62.9H891.3V59.8 M885.8,69.4V65.7H892.4V69.4" fill="none" stroke="#fff" stroke-width="1"/>
<rect x="889.2" y="60.2" width="1.3" height="2.2" fill="#fff"/>
<path d="M927.2,67V60.4Q927.2,59.6 928,59.6H930.8Q931.6,59.6 931.6,60.4V60.9H936.6Q937.4,60.9 937.4,61.7V63.3" fill="none" stroke="#fff" stroke-width="1"/>
<path d="M927.4,68.3L930.2,63.7Q930.5,63.3 931,63.3H940.2Q940.9,63.3 940.5,63.9L937.9,67.9Q937.6,68.3 937.1,68.3Z" fill="none" stroke="#fff" stroke-width="1" stroke-linejoin="round"/>
<path d="M982.6,64.6V67.2Q982.6,68.3 981.5,68.3H974.2Q973.1,68.3 973.1,67.2V61.6Q973.1,60.5 974.2,60.5H979.4" fill="none" stroke="#fff" stroke-width="1.1"/>
<path d="M978.3,64.9L984.6,58.9" stroke="#fff" stroke-width="1.7" fill="none"/>
<polygon points="981.3,57.4 986.4,57.4 986.4,62.5" fill="#fff"/>
<circle cx="1023.5" cy="64.3" r="5.6" fill="#fff"/>
<path d="M1020.3,64.3H1026.7 M1023.5,61.1V67.5" stroke="#656a76" stroke-width="1.6" fill="none"/>
<g transform="translate(1066.5,64.3)"><circle r="3.15" fill="none" stroke="#fff" stroke-width="2.9"/><rect x="-1.15" y="-5.7" width="2.3" height="2.2" fill="#fff" transform="rotate(0)"/><rect x="-1.15" y="-5.7" width="2.3" height="2.2" fill="#fff" transform="rotate(45)"/><rect x="-1.15" y="-5.7" width="2.3" height="2.2" fill="#fff" transform="rotate(90)"/><rect x="-1.15" y="-5.7" width="2.3" height="2.2" fill="#fff" transform="rotate(135)"/><rect x="-1.15" y="-5.7" width="2.3" height="2.2" fill="#fff" transform="rotate(180)"/><rect x="-1.15" y="-5.7" width="2.3" height="2.2" fill="#fff" transform="rotate(225)"/><rect x="-1.15" y="-5.7" width="2.3" height="2.2" fill="#fff" transform="rotate(270)"/><rect x="-1.15" y="-5.7" width="2.3" height="2.2" fill="#fff" transform="rotate(315)"/></g>
<path d="M26.5,109.8V122.5H44" fill="none" stroke="#d2d8da" stroke-width="0.8"/>
<polygon points="28.3,120.8 28.3,115.2 32.3,111 37.5,115.1 40.5,113 42.3,120.8" fill="#d2d8da"/>
<path d="M664.5,109.8V122.5H681.2" fill="none" stroke="#d2d8da" stroke-width="0.8"/>
<rect x="667" y="116.3" width="2" height="4.5" fill="#d2d8da"/><rect x="670.3" y="112" width="2.1" height="8.8" fill="#d2d8da"/><rect x="673.8" y="114" width="2.1" height="6.8" fill="#d2d8da"/><rect x="677" y="111" width="2.1" height="9.8" fill="#d2d8da"/>
<path d="M32.2,446.6 V440 A6.6,6.6 0 1 0 36.9,451.3 Z" fill="#d2d8da"/>
<path d="M34.6,445 V438.8 A6.2,6.2 0 0 1 40.8,445 Z" fill="#d2d8da"/>
<path d="M34.4,446 H40.8 A6.4,6.4 0 0 1 38.9,450.5 Z" fill="#d2d8da"/>
<g transform="translate(592.7,117.5) rotate(-45)" fill="#333">
<rect x="-3.9" y="-2" width="8.1" height="4"/>
<rect x="4.8" y="-2" width="2.1" height="4" rx="0.8"/>
<polygon points="-3.9,-2 -7,0 -3.9,2"/>
<polygon points="-4.7,-0.8 -5.7,0 -4.7,0.8" fill="#f5f5f5"/>
</g>
<path d="M610.6,115.2 L616.2,120.8 M616.2,115.2 L610.6,120.8" stroke="#333" stroke-width="2.7" stroke-linecap="round" fill="none"/>
<g transform="translate(1048.5,117.5) rotate(-45)" fill="#333">
<rect x="-3.9" y="-2" width="8.1" height="4"/>
<rect x="4.8" y="-2" width="2.1" height="4" rx="0.8"/>
<polygon points="-3.9,-2 -7,0 -3.9,2"/>
<polygon points="-4.7,-0.8 -5.7,0 -4.7,0.8" fill="#f5f5f5"/>
</g>
<path d="M1066.1,115.2 L1071.7,120.8 M1071.7,115.2 L1066.1,120.8" stroke="#333" stroke-width="2.7" stroke-linecap="round" fill="none"/>
<g transform="translate(1048.5,447.5) rotate(-45)" fill="#333">
<rect x="-3.9" y="-2" width="8.1" height="4"/>
<rect x="4.8" y="-2" width="2.1" height="4" rx="0.8"/>
<polygon points="-3.9,-2 -7,0 -3.9,2"/>
<polygon points="-4.7,-0.8 -5.7,0 -4.7,0.8" fill="#f5f5f5"/>
</g>
<path d="M1066.1,445.2 L1071.7,450.8 M1071.7,445.2 L1066.1,450.8" stroke="#333" stroke-width="2.7" stroke-linecap="round" fill="none"/>
<path d="M318.8,407 L323.8,401.8 L328.8,407" stroke="#222" stroke-width="2.3" fill="none" stroke-linejoin="miter"/>
<path d="M864.8,407 L869.8,401.8 L874.8,407" stroke="#222" stroke-width="2.3" fill="none" stroke-linejoin="miter"/>
<path d="M546.8,627 L551.8,621.8 L556.8,627" stroke="#222" stroke-width="2.3" fill="none" stroke-linejoin="miter"/>
<path d="M477.8,149.4 L481.7,153.1 L477.8,156.79999999999998" stroke="#333" stroke-width="1.9" fill="none"/>
<path d="M1087.6000000000001,149.3 L1083.7,153 L1087.6000000000001,156.7" stroke="#333" stroke-width="1.9" fill="none"/>
<path d="M933.0,479.5 L936.9000000000001,483.2 L933.0,486.9" stroke="#333" stroke-width="1.9" fill="none"/>
<circle cx="524.1" cy="205.5" r="4.1" fill="none" stroke="#555" stroke-width="1.5"/>
<path d="M527.2,208.6 L530.1,211.3" stroke="#555" stroke-width="1.7" stroke-linecap="round"/>
<path d="M522.1,205.5H526.1" stroke="#8a8a8a" stroke-width="1.1"/>
<path d="M524.1,203.5V207.5" stroke="#8a8a8a" stroke-width="1.1"/>
<circle cx="598.7" cy="205.5" r="4.1" fill="none" stroke="#555" stroke-width="1.5"/>
<path d="M601.8000000000001,208.6 L604.7,211.3" stroke="#555" stroke-width="1.7" stroke-linecap="round"/>
<path d="M596.7,205.5H600.7" stroke="#8a8a8a" stroke-width="1.1"/>
  </g>
</svg>
</body>
</html>
